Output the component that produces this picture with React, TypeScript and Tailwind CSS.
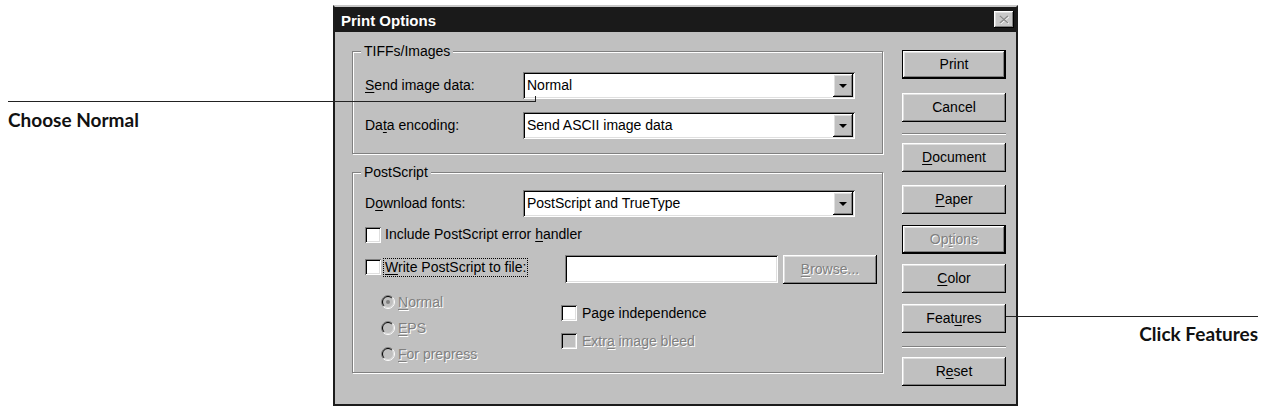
import type { ReactNode } from 'react'

const RAISED =
  'shadow-[inset_-1px_-1px_0_#000,inset_1px_1px_0_#fff,inset_-2px_-2px_0_#808080,inset_2px_2px_0_#dfdfdf]'
const SUNKEN =
  'shadow-[inset_1px_1px_0_#808080,inset_-1px_-1px_0_#fff,inset_2px_2px_0_#000,inset_-2px_-2px_0_#dfdfdf]'
const ETCHED = 'border border-[#808080] shadow-[1px_1px_0_#fff,inset_1px_1px_0_#fff]'
const DISABLED = 'text-[#808080] [text-shadow:1px_1px_0_#fff]'

function U({ children }: { children: ReactNode }) {
  return <span className="underline underline-offset-2">{children}</span>
}

function Button({
  children,
  isDefault,
  disabled,
  className = ''
}: {
  children: ReactNode
  isDefault?: boolean
  disabled?: boolean
  className?: string
}) {
  return (
    <div className={`h-[29px] bg-[#c0c0c0] ${isDefault ? 'border border-black' : ''} ${className}`}>
      <div className={`h-full w-full flex items-center justify-center ${RAISED} ${disabled ? DISABLED : ''}`}>
        {children}
      </div>
    </div>
  )
}

function Combo({ value }: { value: string }) {
  return (
    <div className={`w-[332px] h-[27px] bg-white flex items-center pl-[4px] pr-[2px] ${SUNKEN}`}>
      <span className="flex-1">{value}</span>
      <div className={`w-[20px] h-[23px] bg-[#c0c0c0] flex items-center justify-center ${RAISED}`}>
        <svg width="8" height="4" viewBox="0 0 8 4">
          <path d="M0 0h8L4 4z" fill="#000" />
        </svg>
      </div>
    </div>
  )
}

function Checkbox({ disabled }: { disabled?: boolean }) {
  return <div className={`w-[16px] h-[16px] shrink-0 ${disabled ? 'bg-[#c0c0c0]' : 'bg-white'} ${SUNKEN}`} />
}

function Radio({ checked }: { checked?: boolean }) {
  return (
    <svg width="14" height="14" viewBox="0 0 14 14" className="shrink-0">
      <circle cx="7" cy="7" r="6" fill="#c0c0c0" />
      <path d="M2.4 11.6A6.5 6.5 0 0 1 11.6 2.4" stroke="#808080" fill="none" />
      <path d="M11.6 2.4A6.5 6.5 0 0 1 2.4 11.6" stroke="#fff" fill="none" />
      <path d="M3.1 10.9A5.5 5.5 0 0 1 10.9 3.1" stroke="#000" fill="none" />
      <path d="M10.9 3.1A5.5 5.5 0 0 1 3.1 10.9" stroke="#dfdfdf" fill="none" />
      {checked && <circle cx="7" cy="7" r="2" fill="#808080" />}
    </svg>
  )
}

function GroupBox({ title, className = '', children }: { title: string; className?: string; children: ReactNode }) {
  return (
    <div className={`relative ${ETCHED} ${className}`}>
      <span className="absolute -top-[9px] left-[8px] px-[3px] bg-[#c0c0c0] leading-[17px]">{title}</span>
      {children}
    </div>
  )
}

function Separator({ className = '' }: { className?: string }) {
  return <div className={`h-[2px] border-t border-[#808080] border-b border-b-white ${className}`} />
}

export default function App() {
  return (
    <div className="relative w-[1262px] h-[409px] bg-white flex font-['Liberation_Sans',Arial,sans-serif] text-[14px] text-black">
      {/* Left callout */}
      <div className="w-[333px] pt-[110px] pl-[8px]">
        <span className="font-['Lato','Noto_Sans',sans-serif] font-bold text-[19px] leading-none text-[#111]">
          Choose Normal
        </span>
      </div>

      {/* Dialog */}
      <div className="mt-[5px] w-[685px] h-[401px] border-2 border-[#1c1c1c] border-t-[#c8c8c8] bg-[#c0c0c0] flex flex-col">
        <div className="h-[25px] bg-[#1a1a1a] flex items-center pl-[6px] pr-[2px]">
          <span className="flex-1 pt-[3px] text-white font-bold text-[15px]">Print Options</span>
          <div className={`w-[20px] h-[17px] bg-[#c8c8c8] flex items-center justify-center ${RAISED}`}>
            <svg width="10" height="9" viewBox="0 0 10 9">
              <path d="M1.5 1.5l8 7M9.5 1.5l-8 7" stroke="#fff" strokeWidth="1.6" />
              <path d="M1 1l8 7M9 1l-8 7" stroke="#8a8a8a" strokeWidth="1.6" />
            </svg>
          </div>
        </div>

        <div className="flex pl-[17px] pr-[10px]">
          <div className="w-[531px]">
            <GroupBox title="TIFFs/Images" className="mt-[19px] pt-[20px] pb-[14px] pl-[12px]">
              <div className="flex items-center h-[27px]">
                <span className="w-[158px]">
                  <U>S</U>end image data:
                </span>
                <Combo value="Normal" />
              </div>
              <div className="flex items-center h-[27px] mt-[13px]">
                <span className="w-[158px]">
                  Da<U>t</U>a encoding:
                </span>
                <Combo value="Send ASCII image data" />
              </div>
            </GroupBox>

            <GroupBox title="PostScript" className="mt-[18px] pt-[17px] pb-[11px] pl-[12px]">
              <div className="flex items-center h-[27px]">
                <span className="w-[158px]">
                  D<U>o</U>wnload fonts:
                </span>
                <Combo value="PostScript and TrueType" />
              </div>

              <div className="flex items-center h-[17px] mt-[9px]">
                <Checkbox />
                <span className="ml-[4px]">
                  Include PostScript error <U>h</U>andler
                </span>
              </div>

              <div className="flex items-start h-[29px] mt-[12px]">
                <div className="w-[200px] flex items-start">
                  <div className="mt-[4px]">
                    <Checkbox />
                  </div>
                  <span className="ml-[2px] mt-[3px] h-[19px] px-[1px] border border-dotted border-black leading-[17px]">
                    <U>W</U>rite PostScript to file:
                  </span>
                </div>
                <div className={`w-[213px] h-[28px] bg-white ${SUNKEN}`} />
                <Button disabled className="ml-[5px] w-[94px]">
                  <U>B</U>rowse...
                </Button>
              </div>

              <div className="flex mt-[11px]">
                <div className={`ml-[16px] w-[180px] flex flex-col gap-[12px] ${DISABLED}`}>
                  <div className="flex items-center h-[14px]">
                    <Radio checked />
                    <span className="ml-[3px]">
                      <U>N</U>ormal
                    </span>
                  </div>
                  <div className="flex items-center h-[14px]">
                    <Radio />
                    <span className="ml-[3px]">
                      <U>E</U>PS
                    </span>
                  </div>
                  <div className="flex items-center h-[14px]">
                    <Radio />
                    <span className="ml-[3px]">
                      <U>F</U>or prepress
                    </span>
                  </div>
                </div>
                <div className="mt-[10px] flex flex-col gap-[12px]">
                  <div className="flex items-center h-[16px]">
                    <Checkbox />
                    <span className="ml-[5px]">Page independence</span>
                  </div>
                  <div className="flex items-center h-[16px]">
                    <Checkbox disabled />
                    <span className={`ml-[5px] ${DISABLED}`}>
                      Extr<U>a</U> image bleed
                    </span>
                  </div>
                </div>
              </div>
            </GroupBox>
          </div>

          <div className="ml-[19px] w-[104px] flex flex-col pt-[18px]">
            <Button isDefault>Print</Button>
            <Button className="mt-[14px]">Cancel</Button>
            <Separator className="mt-[11px]" />
            <Button className="mt-[8px]">
              <U>D</U>ocument
            </Button>
            <Button className="mt-[13px]">
              <U>P</U>aper
            </Button>
            <Button isDefault disabled className="mt-[11px]">
              Op<U>t</U>ions
            </Button>
            <Button className="mt-[10px]">
              <U>C</U>olor
            </Button>
            <Button className="mt-[11px]">
              Feat<U>u</U>res
            </Button>
            <Separator className="mt-[13px]" />
            <Button className="mt-[9px]">
              R<U>e</U>set
            </Button>
          </div>
        </div>
      </div>

      {/* Right callout */}
      <div className="flex-1 pt-[324px] pr-[4px] text-right">
        <span className="font-['Lato','Noto_Sans',sans-serif] font-bold text-[19px] leading-none text-[#111]">
          Click Features
        </span>
      </div>

      {/* Leader lines */}
      <div className="absolute left-[8px] top-[101px] w-[528px] h-px bg-[#222]" />
      <div className="absolute left-[535px] top-[96px] w-px h-[6px] bg-[#222]" />
      <div className="absolute left-[1006px] top-[316px] w-[252px] h-px bg-[#222]" />
    </div>
  )
}
